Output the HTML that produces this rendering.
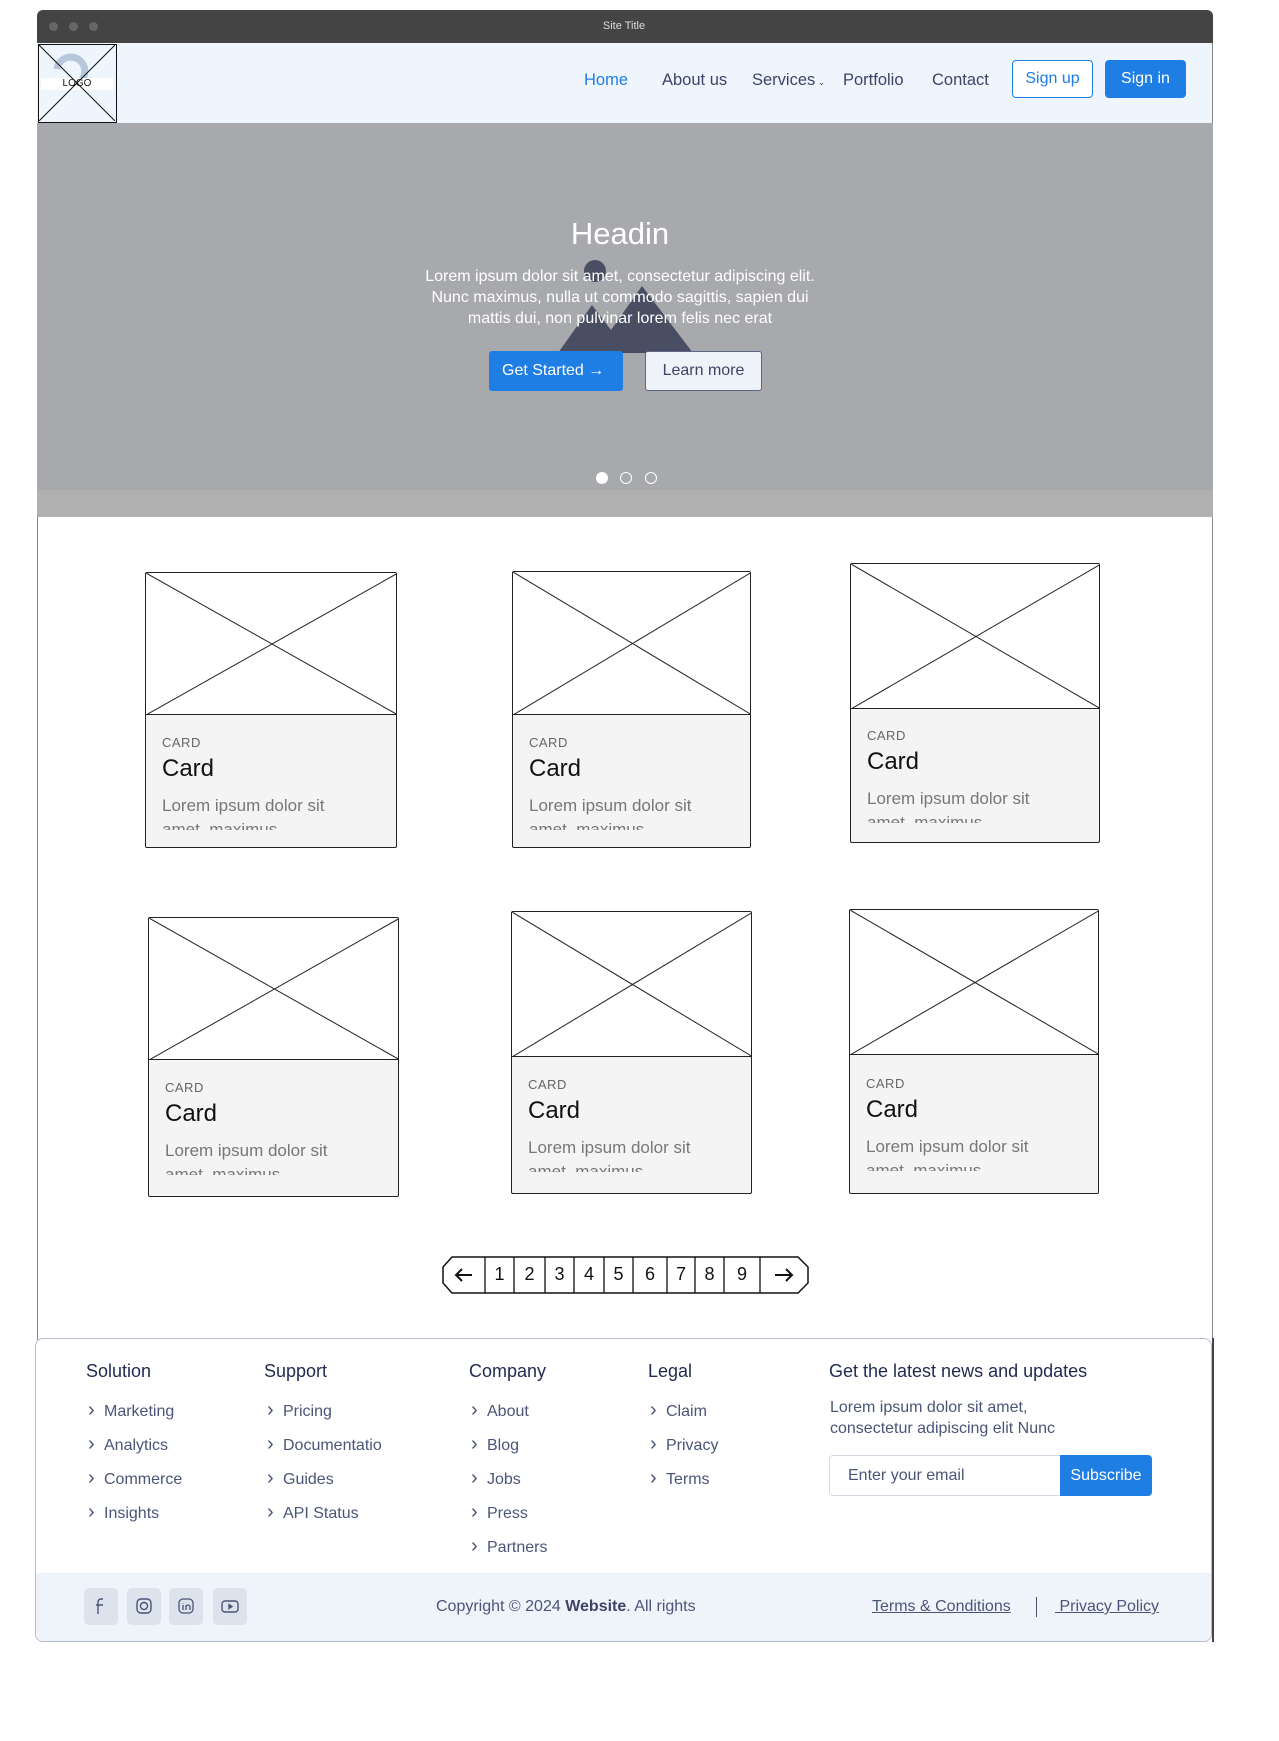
<!DOCTYPE html>
<html><head><meta charset="utf-8"><style>
*{box-sizing:border-box;margin:0;padding:0}
body{width:1279px;height:1741px;background:#fff;position:relative;font-family:"Liberation Sans",sans-serif;overflow:hidden}
.a{position:absolute}
.nav a{position:absolute;top:71px;font-size:16.5px;color:#3d4466;text-decoration:none;white-space:nowrap}
.card{position:absolute;border:1.5px solid #222;border-radius:2px;background:#f4f4f4;overflow:hidden}
.card svg{position:absolute;left:0;top:0;background:#fff;border-bottom:1.5px solid #222}
.card .k{position:absolute;left:16px;font-size:13px;color:#666;letter-spacing:.5px}
.card .t{position:absolute;left:16px;font-size:24px;color:#111}
.card .l{position:absolute;left:16px;font-size:17px;color:#777;line-height:24px;width:200px;height:36px;overflow:hidden}
.fh{position:absolute;top:1361px;font-size:18px;color:#1f2a4f}
.fl{position:absolute;font-size:16px;color:#4a5578;white-space:nowrap}
.fl:before{content:"›";position:absolute;left:-16px;top:-4px;font-size:20px;color:#4a5578}
.soc{position:absolute;top:1588px;width:34px;height:37px;background:#dde3ec;border-radius:5px}
.soc svg{position:absolute;left:7px;top:8px}
.pg{position:absolute;top:1262px;font-size:18px;color:#111;text-align:center}
</style></head><body>
<div class="a" style="left:37px;top:10px;width:1176px;height:33px;background:#444;border-radius:6px 6px 0 0"></div>
<div class="a" style="left:49px;top:22px;width:9px;height:9px;border-radius:50%;background:#666"></div>
<div class="a" style="left:69px;top:22px;width:9px;height:9px;border-radius:50%;background:#666"></div>
<div class="a" style="left:89px;top:22px;width:9px;height:9px;border-radius:50%;background:#666"></div>
<div class="a" style="left:0;width:1248px;top:20px;text-align:center;font-size:11px;color:#ddd">Site Title</div>
<div class="a" style="left:37px;top:43px;width:1176px;height:80px;background:#eff5fd;border-right:1px solid #888"></div>
<div class="a" style="left:38px;top:44px;width:79px;height:79px;border:1.5px solid #111">
<svg width="76" height="76" style="position:absolute;left:0;top:0"><path d="M18 24 A14 14 0 1 1 30 40" stroke="#b6c7dc" stroke-width="7" fill="none"/><rect x="2" y="33" width="72" height="12" fill="#fff"/><line x1="0" y1="0" x2="76" y2="76" stroke="#111"/><line x1="76" y1="0" x2="0" y2="76" stroke="#111"/></svg>
<div class="a" style="left:0;width:76px;top:33px;text-align:center;font-size:10px;color:#111">LOGO</div></div>
<div class="nav">
<a style="left:584px;color:#1e7ee4">Home</a><a style="left:662px">About us</a><a style="left:752px">Services<span style="font-size:9px"> ⌄</span></a><a style="left:843px">Portfolio</a><a style="left:932px">Contact</a></div>
<div class="a" style="left:1012px;top:60px;width:81px;height:38px;border:1px solid #1e7ee4;border-radius:4px;background:#fff;color:#1e7ee4;font-size:16px;text-align:center;line-height:36px">Sign up</div>
<div class="a" style="left:1105px;top:60px;width:81px;height:38px;border-radius:4px;background:#1e7ee4;color:#fff;font-size:16px;text-align:center;line-height:38px">Sign in</div>
<div class="a" style="left:37px;top:123px;width:1176px;height:367px;background:#a8a9ad"></div>
<div class="a" style="left:37px;top:490px;width:1176px;height:27px;background:#b0b0b0"></div>
<svg class="a" style="left:0;top:0" width="1279" height="520"><circle cx="595" cy="271" r="11" fill="#4a4e62"/><polygon points="558,353 592,305 611,330 642,286 693,353" fill="#4a4e62"/></svg>
<div class="a" style="left:0;width:1240px;top:216px;text-align:center;font-size:31px;color:#fff">Headin</div>
<div class="a" style="left:370px;width:500px;top:266px;text-align:center;font-size:16px;line-height:21px;color:#fff">Lorem ipsum dolor sit amet, consectetur adipiscing elit.<br>Nunc maximus, nulla ut commodo sagittis, sapien dui<br>mattis dui, non pulvinar lorem felis nec erat</div>
<div class="a" style="left:489px;top:351px;width:134px;height:40px;border-radius:3px;background:#1e7ee4;color:#fff;font-size:16px;line-height:40px;padding-left:13px">Get Started →</div>
<div class="a" style="left:645px;top:351px;width:117px;height:40px;border-radius:3px;background:#eef2f9;border:1px solid #5e6685;color:#3d4466;font-size:16px;line-height:38px;text-align:center">Learn more</div>
<div class="a" style="left:596px;top:472px;width:12px;height:12px;border-radius:50%;background:#fff"></div>
<div class="a" style="left:620px;top:472px;width:12px;height:12px;border-radius:50%;border:1.5px solid #fff"></div>
<div class="a" style="left:645px;top:472px;width:12px;height:12px;border-radius:50%;border:1.5px solid #fff"></div>
<div class="a" style="left:37px;top:517px;width:1px;height:823px;background:#888"></div>
<div class="a" style="left:1212px;top:517px;width:1px;height:823px;background:#888"></div>
<div class="card" style="left:145px;top:572px;width:252px;height:276px"><svg width="252" height="142"><line x1="0" y1="0" x2="252" y2="142" stroke="#222"/><line x1="252" y1="0" x2="0" y2="142" stroke="#222"/></svg><div class="k" style="top:162px">CARD</div><div class="t" style="top:182px">Card</div><div class="l" style="top:221px">Lorem ipsum dolor sit amet, maximus</div></div>
<div class="card" style="left:512px;top:571px;width:239px;height:277px"><svg width="239" height="143"><line x1="0" y1="0" x2="239" y2="143" stroke="#222"/><line x1="239" y1="0" x2="0" y2="143" stroke="#222"/></svg><div class="k" style="top:163px">CARD</div><div class="t" style="top:183px">Card</div><div class="l" style="top:222px">Lorem ipsum dolor sit amet, maximus</div></div>
<div class="card" style="left:850px;top:563px;width:250px;height:280px"><svg width="250" height="145"><line x1="0" y1="0" x2="250" y2="145" stroke="#222"/><line x1="250" y1="0" x2="0" y2="145" stroke="#222"/></svg><div class="k" style="top:164px">CARD</div><div class="t" style="top:184px">Card</div><div class="l" style="top:223px">Lorem ipsum dolor sit amet, maximus</div></div>
<div class="card" style="left:148px;top:917px;width:251px;height:280px"><svg width="251" height="142"><line x1="0" y1="0" x2="251" y2="142" stroke="#222"/><line x1="251" y1="0" x2="0" y2="142" stroke="#222"/></svg><div class="k" style="top:162px">CARD</div><div class="t" style="top:182px">Card</div><div class="l" style="top:221px">Lorem ipsum dolor sit amet, maximus</div></div>
<div class="card" style="left:511px;top:911px;width:241px;height:283px"><svg width="241" height="145"><line x1="0" y1="0" x2="241" y2="145" stroke="#222"/><line x1="241" y1="0" x2="0" y2="145" stroke="#222"/></svg><div class="k" style="top:165px">CARD</div><div class="t" style="top:185px">Card</div><div class="l" style="top:224px">Lorem ipsum dolor sit amet, maximus</div></div>
<div class="card" style="left:849px;top:909px;width:250px;height:285px"><svg width="250" height="145"><line x1="0" y1="0" x2="250" y2="145" stroke="#222"/><line x1="250" y1="0" x2="0" y2="145" stroke="#222"/></svg><div class="k" style="top:166px">CARD</div><div class="t" style="top:186px">Card</div><div class="l" style="top:225px">Lorem ipsum dolor sit amet, maximus</div></div>
<svg class="a" style="left:440px;top:1254px" width="372" height="42"><path d="M12 3 H358 L368 13 V29 L358 39 H12 L3 29 V13 Z" fill="#fff" stroke="#111" stroke-width="1.5"/>
<g stroke="#111" stroke-width="1.3"><line x1="45" y1="3" x2="45" y2="39"/><line x1="74" y1="3" x2="74" y2="39"/><line x1="105" y1="3" x2="105" y2="39"/><line x1="134" y1="3" x2="134" y2="39"/><line x1="164" y1="3" x2="164" y2="39"/><line x1="193" y1="3" x2="193" y2="39"/><line x1="227" y1="3" x2="227" y2="39"/><line x1="255" y1="3" x2="255" y2="39"/><line x1="284" y1="3" x2="284" y2="39"/><line x1="320" y1="3" x2="320" y2="39"/>
<path d="M32 21 H16 M22 15 L16 21 L22 27" fill="none" stroke-width="2"/><path d="M335 21 H352 M346 15 L352 21 L346 27" fill="none" stroke-width="2"/></g></svg>
<div class="pg" style="left:485px;width:29px;top:1264px">1</div><div class="pg" style="left:514px;width:31px;top:1264px">2</div><div class="pg" style="left:545px;width:29px;top:1264px">3</div><div class="pg" style="left:574px;width:30px;top:1264px">4</div><div class="pg" style="left:604px;width:29px;top:1264px">5</div><div class="pg" style="left:633px;width:34px;top:1264px">6</div><div class="pg" style="left:667px;width:28px;top:1264px">7</div><div class="pg" style="left:695px;width:29px;top:1264px">8</div><div class="pg" style="left:724px;width:36px;top:1264px">9</div>
<div class="a" style="left:35px;top:1338px;width:1177px;height:304px;border:1px solid #b4bccd;border-radius:8px;background:#fff;overflow:hidden"><div class="a" style="left:0;top:234px;width:1177px;height:70px;background:#eff4fb"></div></div>
<div class="a" style="left:1212px;top:1338px;width:2px;height:304px;background:#444"></div>
<div class="fh" style="left:86px">Solution</div><div class="fh" style="left:264px">Support</div><div class="fh" style="left:469px">Company</div><div class="fh" style="left:648px">Legal</div>
<div class="fh" style="left:829px">Get the latest news and updates</div>
<div class="fl" style="left:104px;top:1403px">Marketing</div><div class="fl" style="left:104px;top:1437px">Analytics</div><div class="fl" style="left:104px;top:1471px">Commerce</div><div class="fl" style="left:104px;top:1505px">Insights</div>
<div class="fl" style="left:283px;top:1403px">Pricing</div><div class="fl" style="left:283px;top:1437px">Documentatio</div><div class="fl" style="left:283px;top:1471px">Guides</div><div class="fl" style="left:283px;top:1505px">API Status</div>
<div class="fl" style="left:487px;top:1403px">About</div><div class="fl" style="left:487px;top:1437px">Blog</div><div class="fl" style="left:487px;top:1471px">Jobs</div><div class="fl" style="left:487px;top:1505px">Press</div><div class="fl" style="left:487px;top:1539px">Partners</div>
<div class="fl" style="left:666px;top:1403px">Claim</div><div class="fl" style="left:666px;top:1437px">Privacy</div><div class="fl" style="left:666px;top:1471px">Terms</div>
<div class="a" style="left:830px;top:1397px;font-size:16px;line-height:21px;color:#4a5578;width:300px">Lorem ipsum dolor sit amet,<br>consectetur adipiscing elit Nunc</div>
<div class="a" style="left:829px;top:1455px;width:236px;height:41px;border:1px solid #d3d9e4;border-radius:4px 0 0 4px;background:#fff;font-size:16px;color:#4a5578;line-height:39px;padding-left:18px">Enter your email</div>
<div class="a" style="left:1060px;top:1455px;width:92px;height:41px;border-radius:0 4px 4px 0;background:#1e7ee4;color:#fff;font-size:16px;line-height:41px;text-align:center">Subscribe</div>
<div class="soc" style="left:84px"><svg width="20" height="20" fill="none" stroke="#4a5578" stroke-width="1.4"><path d="M12 3h-2a3 3 0 0 0-3 3v12M5 9h7"/></svg></div>
<div class="soc" style="left:127px"><svg width="20" height="20" fill="none" stroke="#4a5578" stroke-width="1.4"><rect x="3" y="3" width="14" height="14" rx="4"/><circle cx="10" cy="10" r="3.5"/></svg></div>
<div class="soc" style="left:169px"><svg width="20" height="20" fill="none" stroke="#4a5578" stroke-width="1.3"><rect x="3" y="3" width="14" height="14" rx="4"/><path d="M7 9v5M7 7v.5M10 14V9M10 11a2 2 0 0 1 4 0v3"/></svg></div>
<div class="soc" style="left:213px"><svg width="20" height="20" fill="none" stroke="#4a5578" stroke-width="1.4"><rect x="2" y="5" width="16" height="11" rx="3"/><path d="M9 8.5v4l3-2z" fill="#4a5578"/></svg></div>
<div class="a" style="left:436px;top:1598px;font-size:16px;color:#4a5578">Copyright © 2024 <b style="color:#3d4466">Website</b>. All rights</div>
<div class="a" style="left:872px;top:1598px;font-size:16px;color:#4a5578;text-decoration:underline">Terms &amp; Conditions</div>
<div class="a" style="left:1036px;top:1597px;width:1px;height:20px;background:#4a5578"></div>
<div class="a" style="left:1055px;top:1598px;font-size:16px;color:#4a5578;text-decoration:underline">&nbsp;Privacy Policy</div>
</body></html>
